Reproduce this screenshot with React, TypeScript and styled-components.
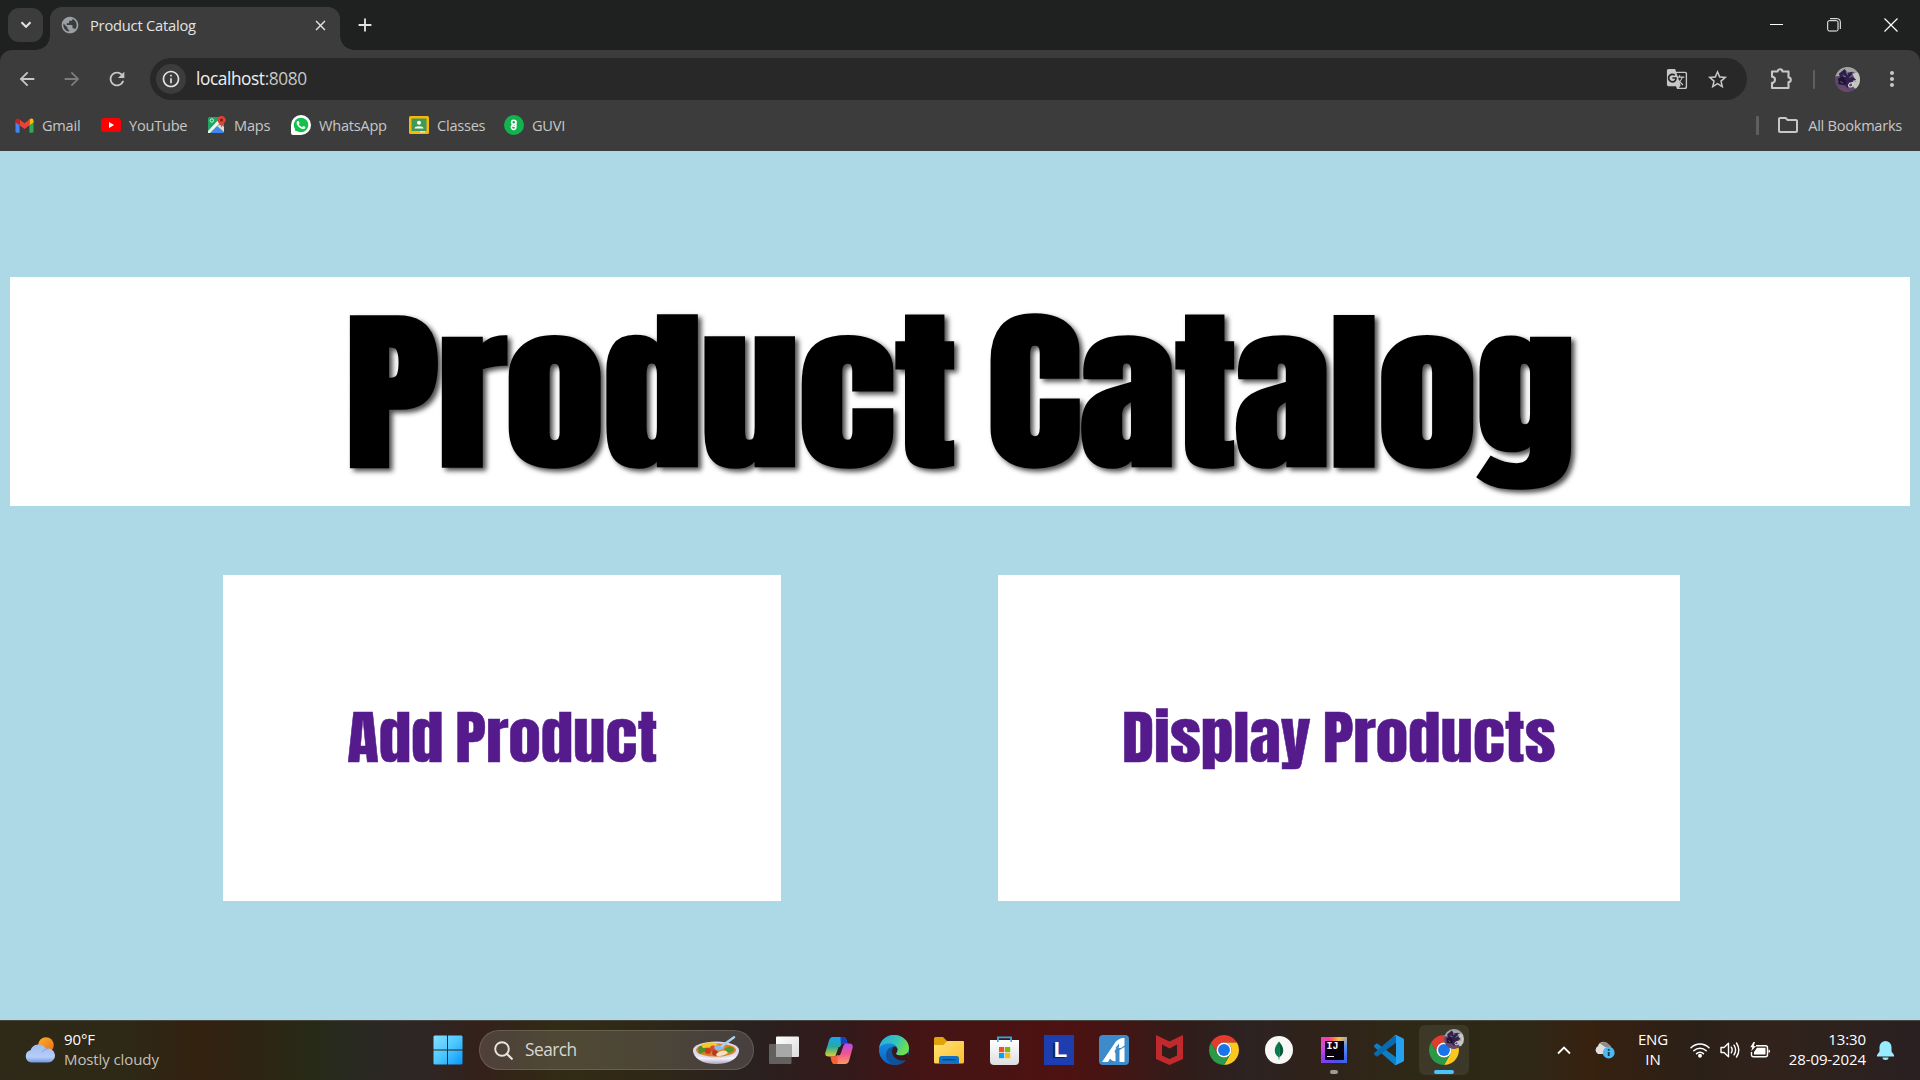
import React from 'react';
import styled, { createGlobalStyle } from 'styled-components';
import {
  MdAdd, MdArrowBack, MdArrowForward, MdClose, MdGTranslate, MdInfoOutline,
  MdMoreVert, MdOutlineFolder, MdPublic, MdRefresh, MdStarBorder,
} from 'react-icons/md';
import { FaWhatsapp } from 'react-icons/fa';

const ui = `"Segoe UI", "Open Sans", "Noto Sans", sans-serif`;
const display = `Impact, Anton, "Roboto Condensed", "Liberation Sans", sans-serif`;

const Global = createGlobalStyle`
  * { box-sizing: border-box; }
  body { margin: 0; background: #add8e6; font-family: ${ui}; overflow: hidden; }
  svg { display: block; flex: none; }
`;

const Screen = styled.div`
  width: 1920px;
  height: 1080px;
  display: flex;
  flex-direction: column;
`;

/* ---------- browser chrome ---------- */

const TabStrip = styled.header`
  height: 50px;
  display: flex;
  align-items: flex-start;
  padding-left: 8px;
  background: #1f2120;
  color: #e3e3e3;
`;

const TabSearch = styled.button`
  width: 35px;
  height: 34px;
  margin: 8px 7px 0 0;
  padding: 0;
  border: 0;
  border-radius: 11px;
  background: #3c3c3c;
  color: #e3e3e3;
  display: grid;
  place-items: center;
`;

const Tab = styled.div`
  position: relative;
  width: 290px;
  height: 43px;
  margin-top: 7px;
  padding: 0 11px 0 10px;
  display: flex;
  align-items: center;
  border-radius: 12px 12px 0 0;
  background: #3c3c3c;

  &::before,
  &::after {
    content: '';
    position: absolute;
    bottom: 0;
    width: 14px;
    height: 14px;
  }
  &::before { left: -14px; background: radial-gradient(circle at 0 0, transparent 13.5px, #3c3c3c 14px); }
  &::after { right: -14px; background: radial-gradient(circle at 100% 0, transparent 13.5px, #3c3c3c 14px); }
`;

const TabTitle = styled.span`
  flex: 1;
  margin: -8px 0 0 10px;
  font-size: 14.7px;
  line-height: 20px;
  letter-spacing: -0.22px;
`;

const TabIcon = styled.span`
  margin-top: -7px;
  color: ${(p: { $color?: string }) => p.$color || '#e3e3e3'};
`;

const NewTab = styled.span`
  margin: 14px 0 0 14px;
`;

const WindowControls = styled.div`
  margin: 0 1px 0 auto;
  height: 49px;
  display: flex;
  align-items: center;
`;

const WindowButton = styled.span`
  width: 57px;
  display: grid;
  place-items: center;
`;

const ToolbarShell = styled.div`
  height: 101px;
  background: linear-gradient(#1f2120 0 14px, transparent 14px);
`;

const ToolbarBody = styled.div`
  height: 101px;
  border-radius: 12px 12px 0 0;
  background: #3c3c3c;
  color: #c7c7c7;
`;

const AddressRow = styled.div`
  height: 58px;
  display: flex;
  align-items: center;
  padding: 0 16px 0 15px;
`;

const NavIcon = styled.span`
  width: 23px;
  margin-right: 22px;
  display: grid;
  place-items: center;
  color: ${(p: { $dim?: boolean }) => (p.$dim ? '#7c7c7c' : '#c7c7c7')};
`;

const Omnibox = styled.div`
  width: 1597px;
  height: 42px;
  padding: 0 18px 0 6px;
  display: flex;
  align-items: center;
  border-radius: 21px;
  background: #282828;
`;

const SiteInfo = styled.span`
  width: 30px;
  height: 30px;
  border-radius: 50%;
  display: grid;
  place-items: center;
  background: #3c3c3c;
  color: #e3e3e3;
`;

const Address = styled.span`
  flex: 1;
  margin-left: 10px;
  font-size: 17.3px;
  line-height: 24px;
  letter-spacing: -0.42px;
  color: #c7c7c7;
  b { font-weight: 400; color: #f0f0f0; }
`;

const OmniActions = styled.span`
  display: flex;
  gap: 18px;
`;

const ToolbarActions = styled.div`
  margin-left: auto;
  display: flex;
  align-items: center;
`;

const Divider = styled.span<{ $w?: number }>`
  display: block;
  width: ${(p) => p.$w || 2}px;
  height: 19px;
  border-radius: 1px;
  background: #5f5f5f;
`;

const BookmarkBar = styled.nav`
  height: 36px;
  display: flex;
  align-items: center;
  padding: 0 18px 2px 15px;
`;

const Bookmark = styled.span<{ $w: number }>`
  width: ${(p) => p.$w}px;
  display: flex;
  align-items: center;
  gap: 8px;
  white-space: nowrap;
  font-size: 14.6px;
  line-height: 20px;
  letter-spacing: -0.25px;
`;

const AllBookmarks = styled.span`
  margin-left: auto;
  display: flex;
  align-items: center;
  gap: 8px;
  font-size: 14.6px;
  line-height: 20px;
  letter-spacing: -0.27px;
`;

/* ---------- page ---------- */

const Page = styled.main`
  height: 869px;
  padding: 126px 10px 0;
  background: #add8e6;
`;

const Banner = styled.h1`
  height: 229px;
  margin: 0 0 69px;
  padding-top: 3px;
  display: flex;
  justify-content: center;
  align-items: center;
  background: #fff;
  color: #000;
  font: 900 172px/226px ${display};
  word-spacing: -12px;
  white-space: nowrap;
  text-shadow: 3px 3px 5px rgba(0, 0, 0, 0.7);
  span { transform: scaleX(1.14); }
`;

const Cards = styled.div`
  display: flex;
  gap: 217px;
  padding-left: 213px;
`;

const Card = styled.a<{ $w: number }>`
  width: ${(p) => p.$w}px;
  height: 326px;
  display: flex;
  align-items: center;
  justify-content: center;
  background: #fff;
  color: #551a8b;
  font: 400 57.5px/80px ${display};
  -webkit-text-stroke: 0.5px #551a8b;
  word-spacing: -3px;
  white-space: nowrap;
  span { transform: scaleX(1.13); }
`;

/* ---------- taskbar ---------- */

const Taskbar = styled.footer`
  height: 60px;
  padding-bottom: 1px;
  display: flex;
  align-items: center;
  border-top: 1px solid #4a453e;
  color: #fff;
  background: linear-gradient(
    90deg,
    #2e2918 0, #2e2817 130px, #33210f 200px, #2d2514 260px, #272a17 310px, #282a20 345px,
    #2e2626 420px, #33211a 480px, #322b14 560px, #302816 640px, #2a2120 750px, #34191a 850px,
    #451415 920px, #4d1211 1060px, #471413 1100px, #301d1a 1190px, #2c2322 1250px, #30221a 1310px,
    #2f2817 1400px, #2d2816 1480px, #302716 1530px, #37210f 1590px, #2b2018 1700px, #31231b 1770px,
    #2a2022 1920px
  );
`;

const Weather = styled.div`
  width: 433px;
  padding-left: 25px;
  display: flex;
  align-items: center;
  gap: 9px;
`;

const Lines = styled.div<{ $align?: string }>`
  display: flex;
  flex-direction: column;
  margin-top: -3px;
  text-align: ${(p) => p.$align || 'left'};
  font-size: 15px;
  line-height: 20px;
  letter-spacing: -0.1px;
  span { color: #c4c1b8; }
`;

const StartButton = styled.span`
  width: 46px;
`;

const SearchBox = styled.div`
  width: 275px;
  height: 40px;
  padding: 0 14px;
  display: flex;
  align-items: center;
  border: 1px solid rgba(255, 255, 255, 0.14);
  border-radius: 20px;
  background: rgba(255, 255, 255, 0.14);
  color: #dad8d2;
  font-size: 17.3px;
  letter-spacing: -0.5px;
  span { flex: 1; margin: -1px 0 0 12px; }
`;

const Apps = styled.div`
  display: flex;
  margin-left: 5px;
`;

const AppIcon = styled.span<{ $mark?: 'idle' | 'active' }>`
  position: relative;
  width: 50px;
  height: 50px;
  margin-right: 5px;
  display: grid;
  place-items: center;
  border-radius: 6px;
  background: ${(p) => (p.$mark === 'active' ? 'rgba(255,255,255,.075)' : 'none')};

  &::after {
    content: '';
    display: ${(p) => (p.$mark ? 'block' : 'none')};
    position: absolute;
    bottom: 1px;
    width: ${(p) => (p.$mark === 'active' ? 20 : 8)}px;
    height: 4px;
    border-radius: 2px;
    background: ${(p) => (p.$mark === 'active' ? '#4cc2ff' : '#9d9b96')};
  }
`;

const Tray = styled.div`
  margin-left: auto;
  display: flex;
  align-items: center;
  padding-right: 26px;
`;

const Lang = styled(Lines)`
  width: 40px;
  margin: -2px 17px 0 18px;
  span { color: #fff; }
`;

const Clock = styled(Lines)`
  width: 86px;
  margin: -3px 11px 0 10px;
  span { color: #fff; }
`;

const TrayIcon = styled.span<{ $gap?: number }>`
  display: flex;
  margin-right: ${(p) => p.$gap ?? 10}px;
`;

/* ---------- drawings ---------- */

const Extension = () => (
  <svg width="24" height="24" viewBox="0 0 24 24" fill="none" stroke="currentColor" strokeWidth="2.100" strokeLinejoin="round">
    <path d="M3 4.500h5.600a2.400 2.200 0 0 1 4.800 0H19.500v6a2.300 2.300 0 0 1 0 4.600V21H3v-5.200a3 3 0 0 0 0-6z" />
  </svg>
);

const Gmail = () => (
  <svg width="19" height="15" viewBox="-0.500 0 20 15">
    <path fill="#4285f4" d="M0 3v10.500Q0 15 1.400 15H4.300V6z" />
    <path fill="#34a853" d="M19 3v10.500q0 1.500-1.400 1.500H14.700V6z" />
    <path fill="#fbbc04" d="M14.700 1.200V7.200L19 4V2.400C19 .2 16.800-.5 15.300.7z" />
    <path fill="#ea4335" d="M4.300 7.200V1.200L9.500 5.100l5.200-3.900v6L9.500 11.100z" />
    <path fill="#c5221f" d="M0 2.400V4l4.300 3.200v-6L3.700.7C2.200-.5 0 .2 0 2.400z" />
  </svg>
);

const YouTube = () => (
  <svg width="20" height="14" viewBox="0 0 20 14">
    <rect width="20" height="14" rx="3.500" fill="#f00" />
    <path d="M8 4l5 3-5 3z" fill="#fff" />
  </svg>
);

const Maps = () => (
  <svg width="18" height="20" viewBox="0 0 18 18">
    <rect y="1" width="16" height="16" rx="1.500" fill="#1fa463" />
    <path d="M3 17l6-7 6.500 7z" fill="#4285f4" />
    <path d="M9 10l4-2 3 3v5z" fill="#dadada" />
    <path d="M0 15L12 2l2 3L2 17H0z" fill="#f3f3f3" />
    <circle cx="3.800" cy="4.500" r="1.700" fill="none" stroke="#d8f0e4" />
    <path d="M13.500 0C11 0 9.300 1.800 9.300 4.100c0 2.600 3.200 3.600 4.200 7.600 1-4 4.200-5 4.200-7.600C17.700 1.800 16 0 13.500 0z" fill="#db4437" />
    <circle cx="13.500" cy="4" r="1.500" fill="#7e1d14" />
  </svg>
);

const Bubble = styled.span`
  width: 20px;
  height: 20px;
  display: grid;
  place-items: center;
  color: #fff;
  border-radius: 50% 50% 50% 2px;
  background: radial-gradient(circle, #12c04b 7.5px, #fff 8.5px);
`;

const Classes = () => (
  <svg width="20" height="18" viewBox="0 0 20 18">
    <rect width="20" height="18" rx="1.500" fill="#f6b90a" />
    <rect x="2.500" y="2.500" width="15" height="12.500" fill="#3f9a55" />
    <circle cx="10" cy="6.700" r="2" fill="#fff" />
    <path d="M5.500 12.500c0-3 9-3 9 0z" fill="#fff" />
    <path d="M11 15h5v1.500h-5z" fill="#e8e0c8" />
  </svg>
);

const Guvi = () => (
  <svg width="20" height="20" viewBox="0 0 20 20">
    <circle cx="10" cy="10" r="10" fill="#12b24e" />
    <g fill="none" stroke="#fff" strokeWidth="1.600">
      <circle cx="9.700" cy="7.300" r="2.100" />
      <path d="M11.800 5.500v6.800a2.200 2.200 0 1 1-3.700-1.600l3.700 1" />
    </g>
  </svg>
);

const Avatar = ({ size = 25 }: { size?: number }) => (
  <svg width={size} height={size} viewBox="0 0 26 26">
    <defs><clipPath id={`av${size}`}><circle cx="13" cy="13" r="13" /></clipPath></defs>
    <g clipPath={`url(#av${size})`}>
      <rect width="26" height="26" fill="#5b4a6b" />
      <path d="M0 0h26v8l-8-3-3 3-5-4-4 5-6 1z" fill="#a3a3a6" />
      <path d="M18 7l8-2v18l-6-1-3-5 4-4z" fill="#c3c7bd" />
      <path d="M10 2l3 4 5-1-1 5 5 3-6 3-3 6-4-5-6 1 3-6-2-5z" fill="#30204a" />
      <path d="M3 12l5-2 4 5-2 4-6-1z" fill="#251337" />
      <path d="M15 17q5-2 3 3-3 2-4-1z" fill="none" stroke="#d9d3dd" strokeWidth="1.200" />
      <path d="M8 9l3 1M15 11l3-2M6 15l2 2M12 5l1 3M19 14l3 1" stroke="#8f86a8" />
      <path d="M2 21l8 1 6 4H4z" fill="#71466f" />
    </g>
  </svg>
);

const WeatherIcon = () => (
  <svg width="30" height="26" viewBox="0 0 30 26">
    <defs>
      <linearGradient id="sun" x1="0" y1="0" x2="1" y2="1"><stop stopColor="#f9b12c" /><stop offset="1" stopColor="#ee6c16" /></linearGradient>
      <linearGradient id="cloud" x1="0" y1="0" x2="0" y2="1"><stop stopColor="#9fbdf3" /><stop offset=".7" stopColor="#b6cdf8" /><stop offset="1" stopColor="#6d97e4" /></linearGradient>
    </defs>
    <circle cx="21" cy="8" r="7.800" fill="url(#sun)" />
    <path d="M6.500 25.500a6.200 6.200 0 0 1-1-12.200A8.500 8.500 0 0 1 21 11.800a7 7 0 1 1 2.500 13.700z" fill="url(#cloud)" />
    <path d="M17 15.500a7 7 0 0 1 6.500-3.700" fill="none" stroke="#7ea2e6" />
  </svg>
);

const Windows = () => (
  <svg width="30" height="30" viewBox="0 0 30 30">
    <defs><linearGradient id="win" gradientUnits="userSpaceOnUse" x1="0" y1="0" x2="30" y2="30"><stop stopColor="#89e0ff" /><stop offset=".5" stopColor="#4cc8fe" /><stop offset="1" stopColor="#0794fb" /></linearGradient></defs>
    <path fill="url(#win)" d="M1.500.5H14v14H.5v-13zM15 .5h13.500l1 1v13H15zM.5 15.500H14v14H1.500l-1-1zM15 15.500h14.500v13l-1 1H15z" />
  </svg>
);

const SearchGlass = () => (
  <svg width="19" height="19" viewBox="0 0 19 19" fill="none" stroke="#e8e6e2">
    <circle cx="8" cy="8" r="6.800" strokeWidth="1.900" />
    <path d="M12.800 12.800l5 5" strokeWidth="2.200" strokeLinecap="round" />
  </svg>
);

const Bowl = () => (
  <svg width="46" height="29" viewBox="0 0 46 29">
    <defs><linearGradient id="bowl" x1="0" y1="0" x2="0" y2="1"><stop stopColor="#cfc8e4" /><stop offset=".6" stopColor="#f4f2fa" /><stop offset="1" stopColor="#aaa2c4" /></linearGradient></defs>
    <path d="M0 14c0 8 9 14 23 14s23-6 23-14z" fill="url(#bowl)" />
    <ellipse cx="23" cy="14" rx="23" ry="8.500" fill="#ded9ee" />
    <ellipse cx="23" cy="14" rx="20" ry="6.800" fill="#d98226" />
    <path d="M5 12q5-5 11-4l-2 7-8 3z" fill="#4f8f2b" />
    <path d="M8 9q8-5 17-1l-4 3-11 1z" fill="#f6c927" />
    <path d="M31 13q6-4 9-1t-4 5z" fill="#4f9a2f" />
    <circle cx="15" cy="15" r="3" fill="#c73b23" /><circle cx="20" cy="12.500" r="3" fill="#d44a2d" /><circle cx="22" cy="17" r="2.800" fill="#bd3220" />
    <path d="M23 18q5-5 10-3l2 2q-5 4-11 3z" fill="#f4dfbe" />
    <path d="M21 12q1-4 8-2l3 1q-4 5-9 3z" fill="#86bbe9" />
    <path d="M29 10L41 1.200" stroke="#a9d1f3" strokeWidth="2.400" strokeLinecap="round" />
  </svg>
);

const TaskView = () => (
  <svg width="30" height="29" viewBox="0 0 30 29">
    <defs><linearGradient id="tv" x1="0" y1="0" x2="1" y2="1"><stop stopColor="#fff" /><stop offset="1" stopColor="#dcdcdc" /></linearGradient></defs>
    <rect x="7" y="0.500" width="23" height="20.500" rx="1" fill="url(#tv)" />
    <rect x="0" y="8" width="22.500" height="20" rx="1" fill="#626160" />
    <rect x="7" y="8" width="15.500" height="13" fill="#a9a8a7" />
  </svg>
);

const Copilot = () => (
  <svg width="28" height="27" viewBox="0 0 28 27">
    <defs>
      <linearGradient id="cpa" x1="0" y1="0" x2="0" y2="1"><stop stopColor="#16a5f2" /><stop offset=".5" stopColor="#2aa9a0" /><stop offset="1" stopColor="#e0d02a" /></linearGradient>
      <linearGradient id="cpb" x1="0" y1="0" x2="0" y2="1"><stop stopColor="#b54df0" /><stop offset=".5" stopColor="#f0558f" /><stop offset="1" stopColor="#ff9a62" /></linearGradient>
    </defs>
    <path d="M8 0h10q2.500 0 3.300 2.500l1.200 4h-3.800q-2.200 0-2.900 2L11.500 17q-.8 2.500-3 2.500H3.500Q-.5 19.500.4 15.500L4.200 3Q5.200 0 8 0z" fill="url(#cpa)" />
    <path d="M15.500 0H18q2.500 0 3.300 2.500l1.200 4h-3.800q-2 0-2.700 1.500z" fill="#1a3fc8" />
    <path d="M20 27H10q-2.500 0-3.200-2.500l-1.300-5H9.500q2.200 0 3-2l.7 1q2 0 2.600-2l2.700-8q.7-2 2.900-2h2.800Q28.500 6.500 27.600 11L24 24q-1 3-4 3z" fill="url(#cpb)" />
    <path d="M12.500 27H10q-2.500 0-3.200-2.500l-1.300-5H10q1.800 0 2.700-1.600z" fill="#f5622f" />
    <path d="M13.600 10h3.300l-2.700 7.800h-3.300z" fill="#2a1e1e" />
  </svg>
);

const Edge = () => (
  <svg width="30" height="30" viewBox="0 0 30 30">
    <defs>
      <linearGradient id="eda" x1="0" y1="0" x2="1" y2=".4"><stop stopColor="#27a9e8" /><stop offset=".6" stopColor="#35c6b8" /><stop offset="1" stopColor="#6fe04c" /></linearGradient>
      <linearGradient id="edb" x1="0" y1="0" x2="0" y2="1"><stop stopColor="#1a9be6" /><stop offset="1" stopColor="#0a62c4" /></linearGradient>
    </defs>
    <circle cx="15" cy="15" r="15" fill="url(#edb)" />
    <path d="M.2 13C1 5.500 7.300 0 15 0c8.500 0 15 6 15 13 0 5-4 7.500-8 7.500-3.300 0-5-1-5-2 0-.8 1.500-1.500 1.500-4C18.500 11 15 8.500 10.500 8.500 5.500 8.500 1.500 10.500.2 13z" fill="url(#eda)" />
    <path d="M10.500 16c0 6.500 5 10.500 10.500 10.500 3 0 5.500-1 6.500-1.700A15 15 0 0 1 15 30C10 29 7 24.500 7 20.500c0-4.500 2.500-7.500 5.500-8.500-1.300 1-2 2.500-2 4z" fill="#11509b" />
    <path d="M18.500 14.500c0 2.500-1.500 3.200-1.500 4 0 1 1.700 2 5 2 2.500 0 5-.9 6.600-2.700.8.200.6 3.700-1.100 7-1 .7-3.500 1.700-6.500 1.700-4 0-9-3.500-9-9.500 0-3 1.800-5.500 3.500-5.500s3 1.500 3 3z" fill="#3a1718" />
    <path d="M10.500 16c0 6.500 5 10.500 10.500 10.500 2.500 0 5-.9 6.500-1.700-1 .4-3 .7-4 .7C17 25.500 13.500 21 13 17c-.1-2.500 1-4.500 2.500-5.500-2.500-.5-5 1.500-5 4.500z" fill="#11509b" />
  </svg>
);

const Explorer = () => (
  <svg width="30" height="27" viewBox="0 0 30 27">
    <defs><linearGradient id="fld" x1="0" y1="0" x2="1" y2="1"><stop stopColor="#ffe178" /><stop offset="1" stopColor="#fcc02c" /></linearGradient></defs>
    <path d="M0 1.500Q0 0 1.500 0H9l4 4-3 5H0z" fill="#e2a209" />
    <path d="M0 8h9.500L13 4h16q1 0 1 1v20q0 1.500-1.500 1.500h-27Q0 26.500 0 25z" fill="url(#fld)" />
    <path d="M5 27v-5.500q0-2.500 2.500-2.500h15q2.500 0 2.500 2.500V27z" fill="#0f72c6" />
    <rect x="8.500" y="22" width="13" height="1.300" fill="#0a3f7b" />
  </svg>
);

const Store = () => (
  <svg width="29" height="30" viewBox="0 0 29 30">
    <defs><linearGradient id="st" x1="0" y1="0" x2="0" y2="1"><stop stopColor="#fff" /><stop offset="1" stopColor="#dedede" /></linearGradient></defs>
    <path d="M8 7V2.300h13V7" fill="none" stroke="#29abe8" strokeWidth="1.800" />
    <path d="M0 5h29v21q0 4-4 4H4q-4 0-4-4z" fill="url(#st)" />
    <path d="M7.800 7V2M21.200 7V2" stroke="#29abe8" strokeWidth="1.600" />
    <rect x="9" y="12" width="5.200" height="5.200" fill="#f25022" /><rect x="15" y="12" width="5.200" height="5.200" fill="#7fba00" />
    <rect x="9" y="18" width="5.200" height="5.200" fill="#00a4ef" /><rect x="15" y="18" width="5.200" height="5.200" fill="#ffb900" />
  </svg>
);

const LTile = styled.span`
  width: 30px;
  height: 30px;
  background: #1d3eae;
  color: #fff;
  display: grid;
  place-items: center;
  font: 700 22px/30px "Liberation Sans", sans-serif;
  padding-left: 3px;
  text-shadow: -2px 1px 0 #0c2348;
`;

const ATile = () => (
  <svg width="30" height="30" viewBox="0 0 30 30">
    <rect width="30" height="30" rx="4" fill="#3d8bcb" />
    <g fill="#fff">
      <path d="M3 27L15.500 8.500q3-5 8.500-5.500h1.500v7.500l-3.500 2.500h-4.500L9 27z" />
      <path d="M20.500 15l5-3v15h-5z" />
      <path d="M11 17.500l4-2 1.500 3v8l-3.500-1-3-3z" />
    </g>
    <path d="M16 13.500l4-5v4zM17.500 15.500h1.800V27h-1.800z" fill="#3d8bcb" />
  </svg>
);

const McAfee = () => (
  <svg width="27" height="30" viewBox="0 0 27 30">
    <path d="M0 0l13.500 6.500L27 0v24l-13.500 6L0 24z" fill="#c1292d" />
    <path d="M6 9.500l7.500 4 7.500-4v11l-7.500 3.500L6 20.500z" fill="#301d1a" />
  </svg>
);

const Chrome = () => (
  <svg width="30" height="30" viewBox="0 0 48 48">
    <path fill="#e33b2e" d="M24 12H44.780A24 24 0 0 0 3.220 12L13.610 30A12 12 0 0 1 24 12z" />
    <path fill="#fcc71e" d="M34.390 30L24 48A24 24 0 0 0 44.780 12H24A12 12 0 0 1 34.390 30z" />
    <path fill="#2a9a47" d="M13.610 30L3.220 12A24 24 0 0 0 24 48L34.390 30A12 12 0 0 1 13.610 30z" />
    <circle cx="24" cy="24" r="12" fill="#fff" />
    <circle cx="24" cy="24" r="9.500" fill="#1a73e8" />
  </svg>
);

const Mongo = () => (
  <svg width="28" height="28" viewBox="0 0 28 28">
    <circle cx="14" cy="14" r="14" fill="#f7f7f5" />
    <path d="M14 5.500c-3 3.500-4.200 6-4.200 9 0 3.200 1.700 5.200 3.800 6.800l.1 2.200h.6l.1-2.200z" fill="#0a7a4c" />
    <path d="M14 5.500c3 3.500 4.200 6 4.200 9 0 3.200-1.700 5.200-3.800 6.800z" fill="#06583b" />
  </svg>
);

const JetTile = styled.span`
  width: 26px;
  height: 26px;
  display: grid;
  place-items: center;
  background: conic-gradient(from 0deg, #fb7b45, #f4c04b 25deg, #5d8ff2 70deg, #3c66ee 130deg, #4e4fe0 170deg, #8a3cf0 225deg, #d84ae0 290deg, #ff3aa0 335deg, #fb7b45);
`;

const JetInner = styled.span`
  width: 19px;
  height: 19px;
  background: #07010d;
  color: #fff;
  font: 700 10px/10px "Liberation Mono", monospace;
  padding: 1px 0 0 2px;
  &::after {
    content: '';
    display: block;
    width: 7px;
    height: 1.5px;
    margin-top: 4px;
    background: #fff;
  }
`;

const VSCode = () => (
  <svg width="30" height="30" viewBox="0 0 30 30">
    <path d="M22 21.700L3 7.800.3 9.800q-.6.900 0 1.700L21.500 30 24 26z" fill="#0f7fc4" transform="translate(0 .5)" />
    <path d="M22 8.300L3 22.200.3 20.200q-.6-.9 0-1.700L21.500 0 24 4z" fill="#0a6ab0" transform="translate(0 -.5)" />
    <path d="M22 0l7 3.300q1 .5 1 1.700v20q0 1.200-1 1.700L22 30q-1 .2-1.500-.5 1.500.3 1.500-1.500V2q0-1.800-1.500-1.500Q21-.2 22 0z" fill="#25a2ef" />
  </svg>
);

const ChromeProfile = styled.span`
  position: relative;
  display: block;
  svg + svg { position: absolute; top: -6px; left: 15px; }
`;

const OneDrive = () => (
  <svg width="21" height="18" viewBox="0 0 21 18">
    <path d="M4 13a4.500 4.500 0 0 1 0-8A5.500 5.500 0 0 1 14 3.500a5 5 0 0 1 3 5L12 13z" fill="#e1dedb" />
    <path d="M6 2.500a6 6 0 0 1 9 1q2.500 1 2.500 5L11 6z" fill="#8f8b88" />
    <circle cx="14.700" cy="11.700" r="5.900" fill="#4cb9f5" />
    <path d="M14.700 8v1.700M14.700 11v4" stroke="#16374a" strokeWidth="1.800" />
  </svg>
);

const Wifi = () => (
  <svg width="20" height="16" viewBox="0 0 20 16" fill="none" stroke="#fff" strokeWidth="1.500" strokeLinecap="round">
    <path d="M1 5.800a12.600 12.600 0 0 1 18 0M3.800 8.800a8.700 8.700 0 0 1 12.400 0M6.600 11.600a4.800 4.800 0 0 1 6.800 0" />
    <circle cx="10" cy="13.700" r="1.200" fill="#fff" />
  </svg>
);

const Volume = () => (
  <svg width="20" height="18" viewBox="0 0 20 18" fill="none" stroke="#fff" strokeWidth="1.400" strokeLinecap="round" strokeLinejoin="round">
    <path d="M1 6.500h3L8.500 2.300v13.400L4 11.500H1z" />
    <path d="M11.300 6.200q1.700 2.800 0 5.600M14 4.200q3.200 4.800 0 9.600M16.500 2q4.600 7 0 14" />
  </svg>
);

const Battery = () => (
  <svg width="20" height="16" viewBox="0 0 20 16">
    <path d="M6 3.700h9.500q2 0 2 2v7q0 2-2 2h-12q-2 0-2-2V10" fill="none" stroke="#fff" strokeWidth="1.400" />
    <path d="M7 5.800h8.500v6.800H4V10z" fill="#fff" />
    <path d="M18.500 7.500q1.500.2 1.500 1.700t-1.500 1.700z" fill="#fff" />
    <path d="M3.500 0L.3 5.200h2L1.200 9.300 6 4H3.700L5 0z" fill="#fff" />
  </svg>
);

const Bell = () => (
  <svg width="17" height="19" viewBox="0 0 17 19">
    <path d="M8.500 0a6 6 0 0 1 6 6v4.500L17 14v1.500H0V14l2.500-3.500V6a6 6 0 0 1 6-6z" fill="#99ebff" />
    <path d="M5.500 16.500h6a3 2.500 0 0 1-6 0z" fill="#99ebff" />
  </svg>
);

export default function App() {
  return (
    <Screen>
      <Global />
      <TabStrip>
        <TabSearch>
          <svg width="12" height="8" viewBox="0 0 12 8" fill="none" stroke="currentColor" strokeWidth="2"><path d="M1.500 1.300L6 5.800l4.500-4.500" /></svg>
        </TabSearch>
        <Tab>
          <TabIcon $color="#9aa0a6"><MdPublic size={20} /></TabIcon>
          <TabTitle>Product Catalog</TabTitle>
          <TabIcon><MdClose size={17} /></TabIcon>
        </Tab>
        <NewTab><MdAdd size={22} /></NewTab>
        <WindowControls>
          <WindowButton><svg width="13" height="2" viewBox="0 0 13 2"><path d="M0 .5h13" stroke="#fff" /></svg></WindowButton>
          <WindowButton>
            <svg width="14" height="14" viewBox="0 0 14 14" fill="none" stroke="#fff">
              <rect x=".7" y="2.700" width="10.300" height="10.300" rx="1.500" />
              <path d="M3 .7h7.500q2.800 0 2.800 2.800V11" />
            </svg>
          </WindowButton>
          <WindowButton><svg width="14" height="14" viewBox="0 0 14 14" stroke="#fff" strokeWidth="1.200"><path d="M.5.5l13 13M13.500.5l-13 13" /></svg></WindowButton>
        </WindowControls>
      </TabStrip>
      <ToolbarShell>
        <ToolbarBody>
          <AddressRow>
            <NavIcon><MdArrowBack size={22} /></NavIcon>
            <NavIcon $dim><MdArrowForward size={22} /></NavIcon>
            <NavIcon><MdRefresh size={22} /></NavIcon>
            <Omnibox>
              <SiteInfo><MdInfoOutline size={20} /></SiteInfo>
              <Address><b>localhost</b>:8080</Address>
              <OmniActions><MdGTranslate size={22} /><MdStarBorder size={23} /></OmniActions>
            </Omnibox>
            <ToolbarActions>
              <TrayIcon $gap={20}><Extension /></TrayIcon>
              <TrayIcon $gap={20}><Divider /></TrayIcon>
              <TrayIcon $gap={20}><Avatar /></TrayIcon>
              <MdMoreVert size={24} />
            </ToolbarActions>
          </AddressRow>
          <BookmarkBar>
            <Bookmark $w={86}><Gmail />Gmail</Bookmark>
            <Bookmark $w={107}><YouTube />YouTube</Bookmark>
            <Bookmark $w={83}><Maps />Maps</Bookmark>
            <Bookmark $w={118}><Bubble><FaWhatsapp size={20} /></Bubble>WhatsApp</Bookmark>
            <Bookmark $w={95}><Classes />Classes</Bookmark>
            <Bookmark $w={80}><Guvi />GUVI</Bookmark>
            <AllBookmarks>
              <TrayIcon $gap={9}><Divider $w={3} /></TrayIcon>
              <MdOutlineFolder size={24} />
              All Bookmarks
            </AllBookmarks>
          </BookmarkBar>
        </ToolbarBody>
      </ToolbarShell>
      <Page>
        <Banner><span>Product Catalog</span></Banner>
        <Cards>
          <Card $w={558}><span>Add Product</span></Card>
          <Card $w={682}><span>Display Products</span></Card>
        </Cards>
      </Page>
      <Taskbar>
        <Weather>
          <WeatherIcon />
          <Lines>90°F<span>Mostly cloudy</span></Lines>
        </Weather>
        <StartButton><Windows /></StartButton>
        <SearchBox><SearchGlass /><span>Search</span><Bowl /></SearchBox>
        <Apps>
          <AppIcon><TaskView /></AppIcon>
          <AppIcon><Copilot /></AppIcon>
          <AppIcon><Edge /></AppIcon>
          <AppIcon><Explorer /></AppIcon>
          <AppIcon><Store /></AppIcon>
          <AppIcon><LTile>L</LTile></AppIcon>
          <AppIcon><ATile /></AppIcon>
          <AppIcon><McAfee /></AppIcon>
          <AppIcon><Chrome /></AppIcon>
          <AppIcon><Mongo /></AppIcon>
          <AppIcon $mark="idle"><JetTile><JetInner>IJ</JetInner></JetTile></AppIcon>
          <AppIcon><VSCode /></AppIcon>
          <AppIcon $mark="active"><ChromeProfile><Chrome /><Avatar size={20} /></ChromeProfile></AppIcon>
        </Apps>
        <Tray>
          <TrayIcon $gap={23}>
            <svg width="14" height="9" viewBox="0 0 14 9" fill="none" stroke="#fff" strokeWidth="1.800"><path d="M1 7.500l6-6 6 6" /></svg>
          </TrayIcon>
          <TrayIcon $gap={0}><OneDrive /></TrayIcon>
          <Lang $align="center">ENG<span>IN</span></Lang>
          <TrayIcon><Wifi /></TrayIcon>
          <TrayIcon><Volume /></TrayIcon>
          <TrayIcon $gap={0}><Battery /></TrayIcon>
          <Clock $align="right">13:30<span>28-09-2024</span></Clock>
          <Bell />
        </Tray>
      </Taskbar>
    </Screen>
  );
}
